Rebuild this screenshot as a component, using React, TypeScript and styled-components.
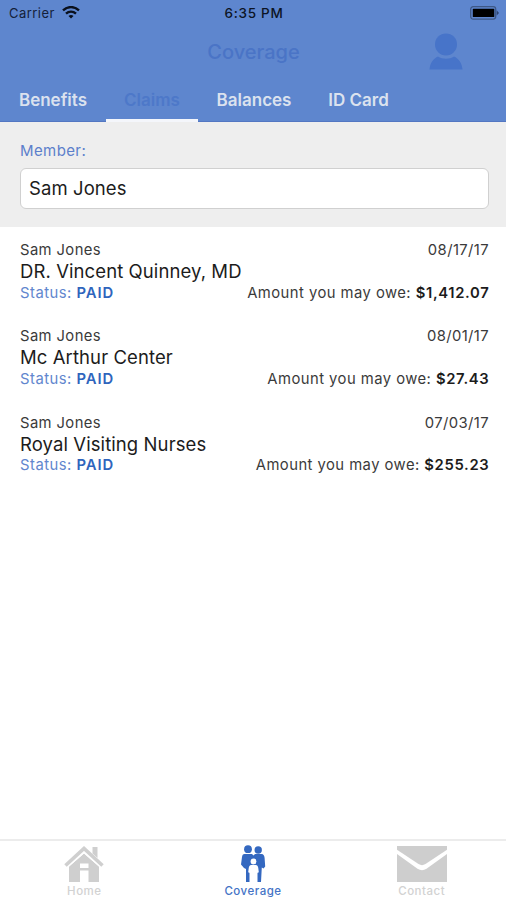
import React from "react";
import styled, { createGlobalStyle } from "styled-components";

const GlobalStyle = createGlobalStyle`
  * { box-sizing: border-box; }
  body { margin: 0; background: #fff; }
`;

const Screen = styled.div`
  width: 506px;
  height: 900px;
  display: flex;
  flex-direction: column;
  overflow: hidden;
  background: #fff;
  color: #1c1c1c;
  font-family: Inter, "Liberation Sans", sans-serif;
  white-space: nowrap;
`;

const Header = styled.header`
  height: 122px;
  display: flex;
  flex-direction: column;
  background: #5e86ce;
  box-shadow: inset 0 -1px #5377c2;
`;

const StatusBar = styled.div`
  height: 26px;
  padding: 0 7px 0 9px;
  display: grid;
  grid-template-columns: 1fr auto 1fr;
  align-items: center;
  font-size: 13px;
  line-height: 26px;
  color: #14213a;
`;

const Carrier = styled.div`
  display: flex;
  align-items: center;
  gap: 7px;
  letter-spacing: 0.45px;
`;

const Clock = styled.div`
  font-size: 13.5px;
  font-weight: 500;
  letter-spacing: 0.7px;
  color: #0c1424;
`;

const BatterySlot = styled.div`
  display: flex;
  justify-content: flex-end;
`;

const TitleBar = styled.div`
  height: 52px;
  padding-right: 43px;
  display: grid;
  grid-template-columns: 1fr auto 1fr;
  align-items: center;
`;

const Title = styled.h1`
  grid-column: 2;
  margin: 0 -44px 0 0;
  font-size: 20px;
  line-height: 52px;
  font-weight: 500;
  letter-spacing: 0;
  color: #4a74c6;
`;

const Profile = styled.div`
  display: flex;
  justify-content: flex-end;
`;

const Tabs = styled.nav`
  display: flex;
  height: 44px;
`;

const Tab = styled.div<{ $width: number; $active?: boolean }>`
  width: ${(p) => p.$width}px;
  height: 44px;
  text-align: center;
  font-size: 17px;
  line-height: 45px;
  font-weight: 600;
  color: ${(p) => (p.$active ? "#4d78c9" : "#dbe2ee")};
  border-bottom: ${(p) => (p.$active ? "3px solid #f4f6fb" : "none")};
`;

const MemberPanel = styled.section`
  height: 105px;
  padding: 19px 17px 0 20px;
  background: #eee;
`;

const Label = styled.label`
  display: block;
  height: 27px;
  font-size: 15px;
  line-height: 20px;
  letter-spacing: 0.4px;
  color: #5c7fcb;
`;

const Field = styled.div`
  height: 41px;
  padding-left: 8px;
  border: 1px solid #d0d0d0;
  border-radius: 6px;
  background: #fff;
  font-size: 18.5px;
  line-height: 38px;
  letter-spacing: 0.08px;
`;

const ClaimList = styled.main`
  flex: 1;
  padding: 13px 17px 0 20px;
`;

const Claim = styled.article`
  height: 86.3px;
`;

const Line = styled.div`
  display: flex;
  justify-content: space-between;
  font-size: 14.8px;
  line-height: 21px;
  letter-spacing: 0.4px;
  color: #3a3a3a;
`;

const Provider = styled.div`
  font-size: 18.5px;
  line-height: 21.5px;
  letter-spacing: 0.09px;
`;

const Status = styled.span`
  letter-spacing: 0.5px;
  color: #6186ce;
  b { font-weight: 600; color: #2f65bd; letter-spacing: 0.9px; }
`;

const Amount = styled.span`
  letter-spacing: 0.46px;
  b { font-weight: 600; color: #1c1c1c; letter-spacing: 0.65px; margin-right: -0.35px; }
`;

const TabBar = styled.footer`
  height: 61px;
  padding-top: 4px;
  border-top: 2px solid #ececec;
  display: grid;
  grid-template-columns: 1fr 1fr 1fr;
`;

const NavItem = styled.div<{ $active?: boolean }>`
  display: flex;
  flex-direction: column;
  align-items: center;
  font-size: 11.5px;
  line-height: 17px;
  font-weight: 500;
  letter-spacing: 0.5px;
  color: ${(p) => (p.$active ? "#4473c6" : "#d2d2d2")};
  svg { display: block; }
`;

const WifiIcon = () => (
  <svg width="18" height="14" viewBox="0 0.7 18 14" fill="none" stroke="#0a101c" strokeWidth="2.3">
    <path d="M1 5.1C5.6.6 12.4.6 17 5.1" />
    <path d="M4 8.4c2.9-2.8 7.1-2.8 10 0" />
    <path d="M9 13.3 6.5 10.8c1.4-1.4 3.6-1.4 5 0Z" fill="#0a101c" stroke="none" />
  </svg>
);

const BatteryIcon = () => (
  <svg width="29" height="14" viewBox="0 0 29 14">
    <rect x=".7" y=".7" width="25" height="12.4" rx="2.5" fill="none" stroke="#3e5886" strokeWidth="1.3" />
    <rect x="2.8" y="2.8" width="21.5" height="8.2" rx=".6" fill="#000" />
    <path d="M26.7 4.3 29 7l-2.3 2.5Z" fill="#2e4571" />
  </svg>
);

const PersonIcon = () => (
  <svg width="34" height="38" viewBox="0 0 34 38" fill="#4774c9">
    <circle cx="17" cy="11.4" r="11" />
    <path d="M.5 36.5C1 30 4.5 25.5 9 23.5c4.5 3 11.5 3 16 0 4.5 2 8 6.5 8.5 13Z" />
  </svg>
);

const HomeIcon = () => (
  <svg width="40" height="38" viewBox="0 0 40 38">
    <path d="M28.5 2h5v11l-5-4.5Z" fill="#cfcfcf" />
    <path d="M1.5 20.5 20 3.5l18.5 17" fill="none" stroke="#cfcfcf" strokeWidth="3.6" />
    <path d="M5 21.5 20 8.5l15 13V37H24.500V25.500h-8.500V37H5Z" fill="#cfcfcf" />
    <path d="M16 18.500h8.500v4.500H16Z" fill="#fff" />
    <path d="M3.500 22.500 20 8l16.500 14.500" fill="none" stroke="#fff" strokeWidth=".9" />
  </svg>
);

const FamilyIcon = () => (
  <svg width="28" height="38" viewBox="0 0 28 38" fill="#3468c0">
    <circle cx="9" cy="4.2" r="3.9" />
    <circle cx="19.2" cy="5" r="3.7" />
    <path d="M5.5 9h7.5l1.5 1.5L16 9h6.5c2 0 3 2 3.1 4l.6 8.5-1.7 2-1.7-1L22 37h-3.500V25h-8v12H7V24l-2-1-3-3.500 1-7.500c.3-1.900 1-3 2.500-3Z" />
    <circle cx="14.5" cy="16.5" r="2.9" fill="#fff" />
    <path d="M12.2 20h4.6c1.6 0 2.3 1.5 2.5 3.3l.5 4-1.5.6-.8-2V37H15v-7h-1v7h-2.500V25.900l-.8 2-1.500-.6.5-4c.3-1.800.9-3.300 2.500-3.300Z" fill="#fff" />
  </svg>
);

const MailIcon = () => (
  <svg width="50" height="38" viewBox="0 0 50 38" fill="#cecece">
    <path d="M0 1h50v3.7L28.5 19c-2.5 1.5-4.5 1.5-7 0L0 4.7Z" />
    <path d="M0 9 20.5 23.8c3 1.8 6 1.8 9 0L50 9V37H0Z" />
  </svg>
);

const tabs = [
  { label: "Benefits", width: 106 },
  { label: "Claims", width: 92, active: true },
  { label: "Balances", width: 112 },
  { label: "ID Card", width: 97 },
];

const claims = [
  { date: "08/17/17", provider: "DR. Vincent Quinney, MD", amount: "$1,412.07" },
  { date: "08/01/17", provider: "Mc Arthur Center", amount: "$27.43" },
  { date: "07/03/17", provider: "Royal Visiting Nurses", amount: "$255.23" },
];

export default function App() {
  return (
    <Screen>
      <GlobalStyle />
      <Header>
        <StatusBar>
          <Carrier>Carrier<WifiIcon /></Carrier>
          <Clock>6:35 PM</Clock>
          <BatterySlot><BatteryIcon /></BatterySlot>
        </StatusBar>
        <TitleBar>
          <Title>Coverage</Title>
          <Profile><PersonIcon /></Profile>
        </TitleBar>
        <Tabs>
          {tabs.map((t) => (
            <Tab key={t.label} $width={t.width} $active={t.active}>{t.label}</Tab>
          ))}
        </Tabs>
      </Header>
      <MemberPanel>
        <Label>Member:</Label>
        <Field>Sam Jones</Field>
      </MemberPanel>
      <ClaimList>
        {claims.map((c) => (
          <Claim key={c.date}>
            <Line><span>Sam Jones</span><span>{c.date}</span></Line>
            <Provider>{c.provider}</Provider>
            <Line>
              <Status>Status: <b>PAID</b></Status>
              <Amount>Amount you may owe: <b>{c.amount}</b></Amount>
            </Line>
          </Claim>
        ))}
      </ClaimList>
      <TabBar>
        <NavItem><HomeIcon />Home</NavItem>
        <NavItem $active><FamilyIcon />Coverage</NavItem>
        <NavItem><MailIcon />Contact</NavItem>
      </TabBar>
    </Screen>
  );
}
